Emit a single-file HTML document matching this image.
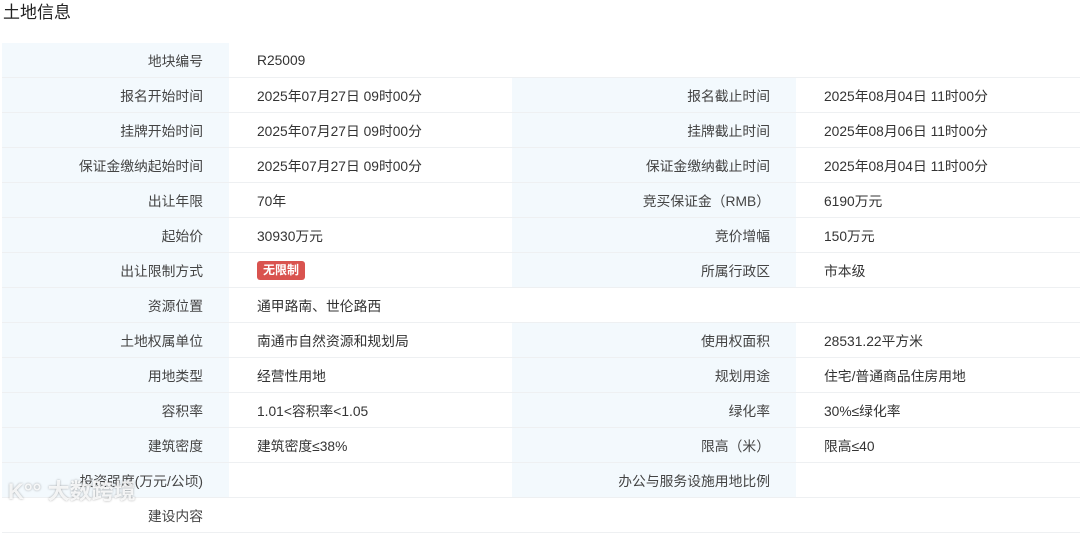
<!DOCTYPE html>
<html><head><meta charset="utf-8"><style>
body{margin:0;width:1080px;height:511px;overflow:hidden;background:#fff;font-family:"Liberation Sans","Noto Sans CJK SC",sans-serif;color:#333}
h1{position:absolute;left:3px;top:0;margin:0;font-size:17px;font-weight:normal;line-height:26px;color:#222}
table{position:absolute;left:2px;top:43px;border-collapse:collapse;width:1078px;table-layout:fixed;font-size:13.8px}
td{height:34px;border-bottom:1px solid #eef0f2;padding:0;white-space:nowrap}
td.l{background:#f3f9fd;text-align:right;padding-right:26px;color:#444}
td.v{padding-left:28px;color:#333}
.b{display:inline-block;background:#d9534f;color:#fff;font-weight:bold;font-size:12px;line-height:19px;padding:0 6px;border-radius:3px}
.wm{position:absolute;left:8px;top:474px;font-size:22px;color:rgba(255,255,255,.85);text-shadow:0 0 2px rgba(0,0,0,.35);font-weight:bold}
</style></head><body>
<h1>土地信息</h1>
<table>
<colgroup><col style="width:227px"><col style="width:283px"><col style="width:284px"><col style="width:284px"></colgroup>
<tr><td class="l">地块编号</td><td class="v" colspan="3">R25009</td></tr>
<tr><td class="l">报名开始时间</td><td class="v">2025年07月27日 09时00分</td><td class="l">报名截止时间</td><td class="v">2025年08月04日 11时00分</td></tr>
<tr><td class="l">挂牌开始时间</td><td class="v">2025年07月27日 09时00分</td><td class="l">挂牌截止时间</td><td class="v">2025年08月06日 11时00分</td></tr>
<tr><td class="l">保证金缴纳起始时间</td><td class="v">2025年07月27日 09时00分</td><td class="l">保证金缴纳截止时间</td><td class="v">2025年08月04日 11时00分</td></tr>
<tr><td class="l">出让年限</td><td class="v">70年</td><td class="l">竞买保证金（RMB）</td><td class="v">6190万元</td></tr>
<tr><td class="l">起始价</td><td class="v">30930万元</td><td class="l">竞价增幅</td><td class="v">150万元</td></tr>
<tr><td class="l">出让限制方式</td><td class="v"><span class="b">无限制</span></td><td class="l">所属行政区</td><td class="v">市本级</td></tr>
<tr><td class="l">资源位置</td><td class="v" colspan="3">通甲路南、世伦路西</td></tr>
<tr><td class="l">土地权属单位</td><td class="v">南通市自然资源和规划局</td><td class="l">使用权面积</td><td class="v">28531.22平方米</td></tr>
<tr><td class="l">用地类型</td><td class="v">经营性用地</td><td class="l">规划用途</td><td class="v">住宅/普通商品住房用地</td></tr>
<tr><td class="l">容积率</td><td class="v">1.01&lt;容积率&lt;1.05</td><td class="l">绿化率</td><td class="v">30%≤绿化率</td></tr>
<tr><td class="l">建筑密度</td><td class="v">建筑密度≤38%</td><td class="l">限高（米）</td><td class="v">限高≤40</td></tr>
<tr><td class="l">投资强度(万元/公顷)</td><td class="v"></td><td class="l">办公与服务设施用地比例</td><td class="v"></td></tr>
<tr><td class="l" style="background:#fff">建设内容</td><td class="v" colspan="3"></td></tr>
</table>
<div class="wm">K°° 大数跨境</div>
</body></html>
